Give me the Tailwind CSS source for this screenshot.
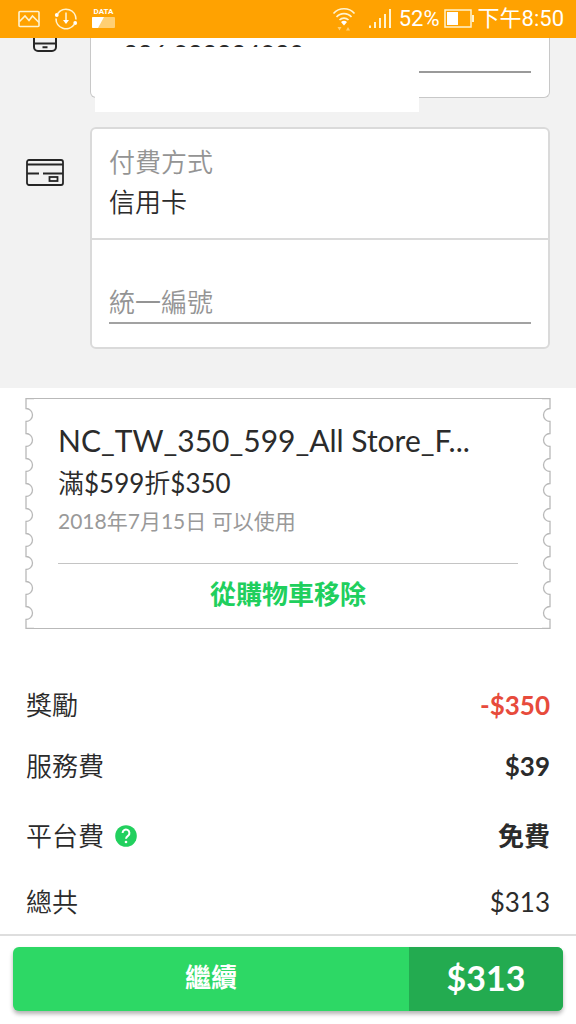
<!DOCTYPE html>
<html lang="zh-Hant">
<head>
<meta charset="utf-8">
<meta name="viewport" content="width=device-width, initial-scale=1">
<title>結帳</title>
<script src="https://cdn.jsdelivr.net/npm/@tailwindcss/browser@4"></script>
</head>
<body class="flex min-h-screen flex-col bg-white font-['Lato','Noto_Sans_CJK_TC',sans-serif] text-[#2b2b2b]">

<header class="flex h-[38px] items-center justify-between bg-[#ffa201] pl-[18px] pr-3 font-['Roboto','Noto_Sans_CJK_TC',sans-serif] text-white">
  <div class="flex items-center gap-[14px]">
    <svg class="h-[18px] w-[22px]" viewBox="0 0 22 18" fill="none" stroke="#fff3d0" stroke-width="1.600"><rect x="1" y="1.500" width="20" height="15" rx="1"/><path d="M1.500 11.500 7 6l4 4.500L14.500 6l6.500 6.500"/></svg>
    <svg class="h-6 w-6" viewBox="0 0 24 24" fill="none" stroke="#fff3d0" stroke-width="1.600"><path d="M3.800 6.500a10 10 0 0 1 18.200 6M20.200 17.500A10 10 0 0 1 2 11.500"/><path d="M12 5.500v10"/><path d="M9 13h6l-3 4z" fill="#fff" stroke="none"/><circle cx="2.800" cy="8" r="1.900" fill="#fff" stroke="none"/><circle cx="21.200" cy="16" r="1.900" fill="#fff" stroke="none"/></svg>
    <div class="flex flex-col items-center gap-px pb-1">
      <span class="text-[8px] leading-[9px] font-bold">DATA</span>
      <svg class="h-[11px] w-[23px]" viewBox="0 0 23 11"><rect width="23" height="11" rx="1" fill="#ffcf73"/><path d="M1 0h11L6 11H1a1 1 0 0 1-1-1V1a1 1 0 0 1 1-1z" fill="#fff"/></svg>
    </div>
  </div>
  <div class="flex items-center gap-1">
    <svg class="mr-2 h-6 w-6" viewBox="0 0 24 24" fill="none" stroke="#fff3d0" stroke-width="1.700"><path d="M1.500 6.500a14 14 0 0 1 21 0M4.500 10a10 10 0 0 1 15 0M7.500 13a6.500 6.500 0 0 1 9 0"/><path d="M9 15a4.500 4.500 0 0 1 6 0L12 18.500z" fill="#fff" stroke="none"/><path d="M5.500 20h4l-2 3.500zM14 23.500h4L16 20z" fill="#ffcf73" stroke="none"/></svg>
    <svg class="h-5 w-[23px]" viewBox="0 0 23 20" fill="#fff3d0"><path d="M1 16.500h2v2.500H1zM6 13h2v6H6zM11 9h2v10h-2zM16 5h2v14h-2zM21 0h2v19h-2z"/></svg>
    <span class="ml-1 text-[22px] leading-6">52%</span>
    <svg class="h-5 w-[30px]" viewBox="0 0 30 20"><rect x="1" y="1" width="26" height="17" fill="none" stroke="#fff3d0" stroke-width="1.500"/><rect x="3" y="3" width="11" height="13" fill="#fff"/><path d="M28 6h2v7h-2z" fill="#fff3d0"/></svg>
    <span class="text-[22px] leading-6">下午8:50</span>
  </div>
</header>

<main>
  <section class="bg-[#f2f2f2] pb-[39px]">
    <div class="flex h-[74px] items-start px-[26px]">
      <div class="flex w-16 pl-[7px]">
        <svg class="h-[14px] w-6" viewBox="0 0 24 14" fill="none" stroke="#262626" stroke-width="2"><path d="M1 0v9a4 4 0 0 0 4 4h14a4 4 0 0 0 4-4V0M1 5.500h22M9.500 9.200h5"/></svg>
      </div>
      <div class="relative h-[60px] flex-1 rounded-b-md border border-t-0 border-[#c8c8c8] bg-white px-[18px]">
        <div class="h-[35px] border-b-2 border-[#9a9a9a] text-[25px] leading-[30px]">+886 922224920</div>
        <div class="absolute left-1 right-[130px] top-[9px] h-[65px] bg-white"></div>
      </div>
    </div>
    <div class="mt-[15px] flex px-[26px]">
      <div class="w-16 pt-8">
        <svg class="h-[27px] w-[38px]" viewBox="0 0 38 27" fill="none" stroke="#262626" stroke-width="1.800"><rect x="1" y="1" width="36" height="25" rx="2"/><path d="M1 5.500h36M1 14.500h12M17 14.500h20"/><rect x="23.500" y="18" width="8" height="4"/></svg>
      </div>
      <div class="flex-1 rounded-md border-2 border-[#dadada] bg-white">
        <div class="flex h-[111px] flex-col border-b-2 border-[#dadada] px-[17px] pt-[13px] text-[26px]">
          <span class="leading-10 font-[350] text-[#949494]">付費方式</span>
          <span class="leading-10 font-[350]">信用卡</span>
        </div>
        <div class="px-[17px] pt-[42px] pb-[23px]">
          <input aria-label="統一編號" placeholder="統一編號" class="block h-[42px] w-full border-b-2 border-[#a2a2a2] bg-transparent text-[26px] leading-10 font-[350] outline-none placeholder:text-[#949494]">
        </div>
      </div>
    </div>
  </section>

  <section class="flex px-[25px] pt-[10px]">
    <svg class="h-[231px] w-[9px] shrink-0" viewBox="0 0 9 231" fill="none" stroke="#b9b9b9" stroke-width="1.300"><path d="M9 .5H1V10.500a6.500 6.500 0 0 1 0 13V35.500a6.500 6.500 0 0 1 0 13V60.500a6.500 6.500 0 0 1 0 13V85.500a6.500 6.500 0 0 1 0 13V110.500a6.500 6.500 0 0 1 0 13V135.500a6.500 6.500 0 0 1 0 13V158.500a6.500 6.500 0 0 1 0 13V183.500a6.500 6.500 0 0 1 0 13V208.500a6.500 6.500 0 0 1 0 13V230.500H9"/></svg>
    <div class="h-[231px] min-w-0 flex-1 border-y border-[#b9b9b9] px-6 pt-[23px]">
      <h2 class="truncate text-[30px] leading-9">NC_TW_350_599_All Store_F...</h2>
      <p class="mt-[5px] text-[26px] leading-10"><span class="font-[350]">滿</span>$599<span class="font-[350]">折</span>$350</p>
      <p class="pb-1 text-[21px] leading-9 text-[#999]">2018年7月15日 可以使用</p>
      <div class="mt-5 border-t border-[#c4c4c4] pt-2">
        <button class="block w-full text-[26px] leading-[44px] font-bold text-[#20cf5d]">從購物車移除</button>
      </div>
    </div>
    <svg class="h-[231px] w-[9px] shrink-0 -scale-x-100" viewBox="0 0 9 231" fill="none" stroke="#b9b9b9" stroke-width="1.300"><path d="M9 .5H1V10.500a6.500 6.500 0 0 1 0 13V35.500a6.500 6.500 0 0 1 0 13V60.500a6.500 6.500 0 0 1 0 13V85.500a6.500 6.500 0 0 1 0 13V110.500a6.500 6.500 0 0 1 0 13V135.500a6.500 6.500 0 0 1 0 13V158.500a6.500 6.500 0 0 1 0 13V183.500a6.500 6.500 0 0 1 0 13V208.500a6.500 6.500 0 0 1 0 13V230.500H9"/></svg>
  </section>

  <dl class="px-[26px] pt-14 text-[26px] leading-10">
    <div class="flex justify-between"><dt class="font-[350]">獎勵</dt><dd class="font-bold text-[#e74b3c]">-$350</dd></div>
    <div class="mt-[21px] flex justify-between"><dt class="font-[350]">服務費</dt><dd class="font-bold">$39</dd></div>
    <div class="mt-[30px] flex justify-between">
      <dt class="flex items-center gap-[11px] font-[350]">平台費
        <button aria-label="說明"><svg class="h-[22px] w-[22px]" viewBox="0 0 22 22" fill="none"><circle cx="11" cy="11" r="10.800" fill="#22d05e"/><path d="M7.600 8a3.400 3.400 0 1 1 5.600 2.600c-1.400 1-2.200 1.600-2.200 3.200" stroke="#fff" stroke-width="2"/><circle cx="11" cy="17" r="1.300" fill="#fff"/></svg></button>
      </dt>
      <dd class="font-bold">免費</dd>
    </div>
    <div class="mt-[26px] flex justify-between"><dt class="font-[350]">總共</dt><dd>$313</dd></div>
  </dl>
</main>

<footer class="mt-3 border-t-2 border-[#dedede] px-[13px] pt-[11px] pb-[13px]">
  <button class="flex h-16 w-full overflow-hidden rounded-md bg-[#2dd865] text-white shadow-[0_3px_4px_#0000004d]">
    <span class="flex h-full flex-1 items-center justify-center pb-[3px] text-[26px] font-bold">繼續</span>
    <span class="flex h-full w-[28%] items-center justify-center bg-[#23ab50] pb-[3px] text-[34px] font-bold">$313</span>
  </button>
</footer>
</body>
</html>
